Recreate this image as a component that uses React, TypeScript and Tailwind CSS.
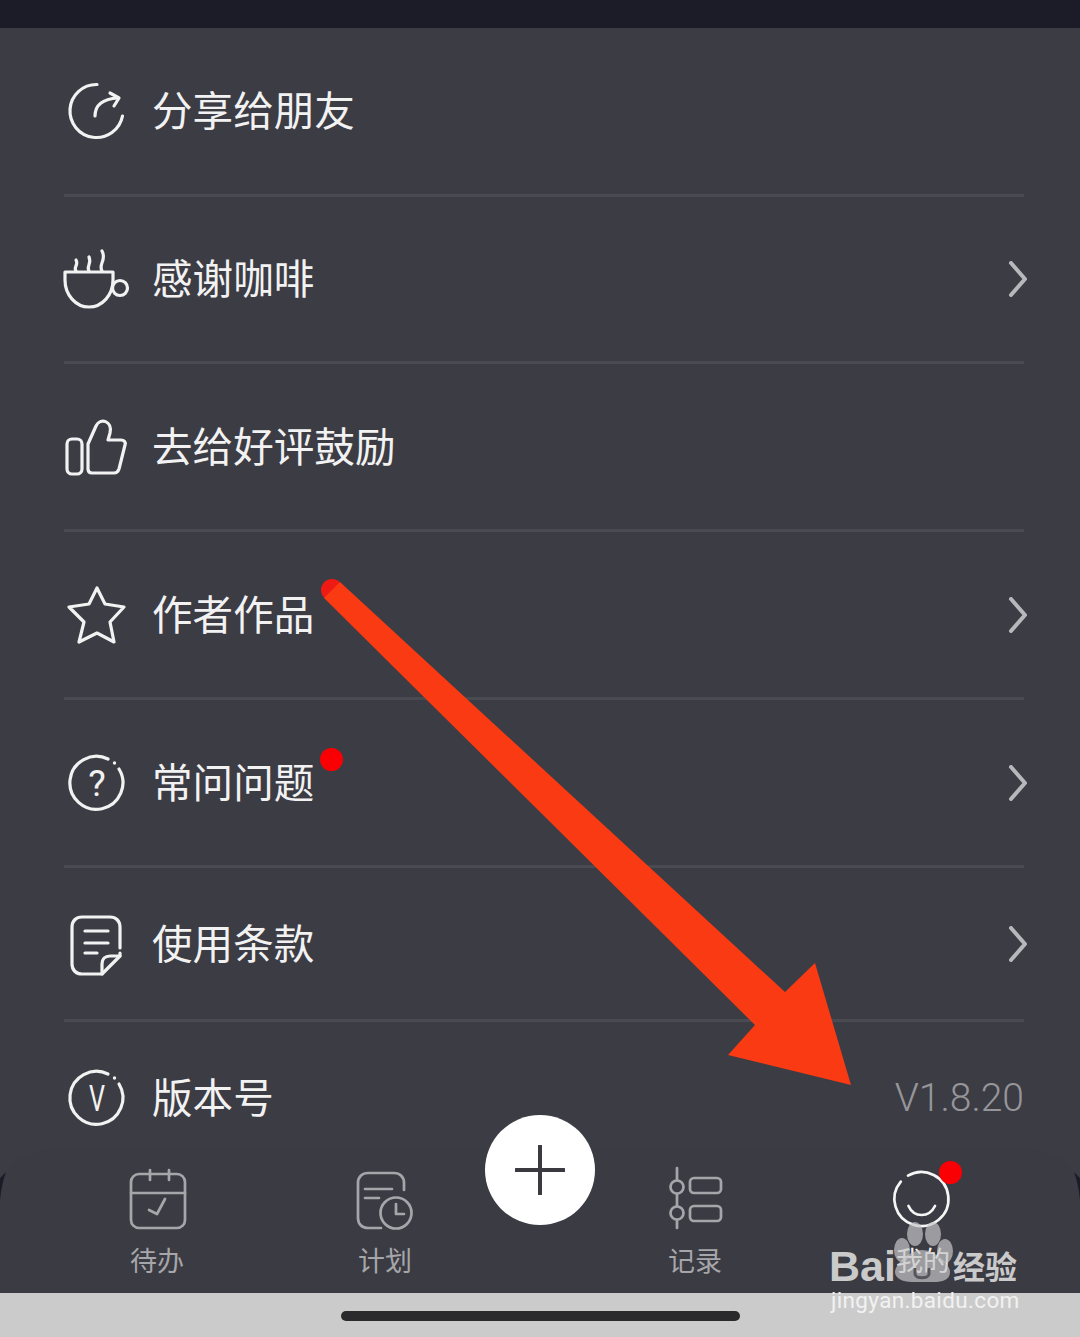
import React from "react";

const cjk = "font-['Noto_Sans_CJK_SC','Noto_Sans',sans-serif]";

type IconProps = { children: React.ReactNode };
const RowIcon = ({ children }: IconProps) => (
  <svg width="64" height="64" viewBox="0 0 64 64" fill="none" stroke="#f2f2f2" strokeWidth="3.2" strokeLinecap="round" strokeLinejoin="round" className="shrink-0 overflow-visible">
    {children}
  </svg>
);
const NavIcon = ({ children, color = "#a6a6aa" }: IconProps & { color?: string }) => (
  <svg width="60" height="64" viewBox="0 0 60 64" fill="none" stroke={color} strokeWidth="2.7" strokeLinecap="round" strokeLinejoin="round" className="shrink-0 overflow-visible">
    {children}
  </svg>
);

const Chevron = () => (
  <svg width="20" height="36" viewBox="0 0 20 36" fill="none" stroke="#b8b8bc" strokeWidth="4" strokeLinecap="round" strokeLinejoin="round" className="-mr-[4px]">
    <path d="M3 2 L17 18 L3 34" />
  </svg>
);

const Row = ({ icon, label, chevron, dot, className, children }: { icon: React.ReactNode; label: string; chevron?: boolean; dot?: boolean; className: string; children?: React.ReactNode }) => (
  <div className={`flex items-center ${className}`}>
    {icon}
    <span className={`relative ml-[24px] -mt-[4px] text-[40.6px] leading-[56px] text-[#f2f2f2] font-normal ${cjk}`}>
      {label}
      {dot && <span className="absolute left-[168px] top-[-5px] w-[23px] h-[23px] rounded-full bg-[#fa0005]" />}
    </span>
    <div className="flex-1" />
    {chevron && <Chevron />}
    {children}
  </div>
);

const border = "border-b-[3px] border-[#4a4a51]";

const RingWithDot = () => (
  <>
    <path d="M44 8 A26.5 26.5 0 1 0 55 18" />
    <circle cx="50.5" cy="12" r="1.7" fill="#f2f2f2" stroke="none" />
  </>
);

export default function App() {
  return (
    <div className={`relative w-[1080px] h-[1337px] overflow-hidden bg-[#3c3c44] ${cjk}`}>
      <div className="h-[28px] bg-[#1c1c28]" />
      <div className="mx-[64px] w-[960px]">
        <Row className={`h-[169px] ${border}`} label="分享给朋友" icon={
          <RowIcon>
            <path d="M33 5.5 A26.5 26.5 0 1 0 58.5 37" />
            <path d="M31 37 C31 27 37 20 54 19" />
            <path d="M46 14 L55 19 L50 27" />
          </RowIcon>
        } />
        <Row className={`h-[167px] ${border}`} label="感谢咖啡" chevron icon={
          <RowIcon>
            <path d="M1 25 H49 V33 A24 27 0 0 1 1 33 Z" />
            <circle cx="56" cy="41" r="7.5" />
            <path d="M12 24 C9 20 15 18 12 13" />
            <path d="M25 24 C22 19 28 17 25 10" />
            <path d="M38 24 C34 17 43 13 38 4" />
          </RowIcon>
        } />
        <Row className={`h-[168px] ${border}`} label="去给好评鼓励" icon={
          <RowIcon>
            <rect x="3" y="24" width="15" height="35" rx="5" />
            <path d="M24 54 V29 L32 11 C36 2 49 6 46 18 L44 25 H57 C60 25 62 27 61 30 L55 54 C54 57 53 58 50 58 H28 C25 58 24 56 24 54 Z" />
          </RowIcon>
        } />
        <Row className={`h-[168px] ${border}`} label="作者作品" chevron icon={
          <RowIcon>
            <polygon points="33,5 41,21 60,24 46,39 50,59 33,50 15,59 20,39 5,24 25,21" />
          </RowIcon>
        } />
        <Row className={`h-[168px] ${border}`} label="常问问题" chevron dot icon={
          <RowIcon>
            <RingWithDot />
            <text x="33" y="45" textAnchor="middle" fontSize="37" fontWeight="400" fill="#f2f2f2" stroke="none" fontFamily="Roboto, sans-serif">?</text>
          </RowIcon>
        } />
        <Row className={`h-[154px] ${border}`} label="使用条款" chevron icon={
          <RowIcon>
            <path d="M56 36 V15 C56 9 52 5 46 5 H18 C12 5 8 9 8 15 V52 C8 58 12 62 18 62 H38 L56 44 V41" />
            <path d="M38 62 V52 C38 47 41 44 46 44 H56" />
            <path d="M21 19 H44 M21 31 H44 M21 41 H33" />
          </RowIcon>
        } />
        <Row className="h-[128px] pt-[24px]" label="版本号" icon={
          <RowIcon>
            <RingWithDot />
            <text transform="translate(33 45) scale(0.68 1)" textAnchor="middle" fontSize="37" fontWeight="400" fill="#f2f2f2" stroke="none" fontFamily="Roboto, sans-serif">V</text>
          </RowIcon>
        }>
          <span className="text-[39px] leading-[56px] text-[#96969a] font-light font-['Roboto',sans-serif]">V1.8.20</span>
        </Row>
      </div>

      <nav className="relative h-[143px] grid grid-cols-[314px_142px_168px_142px_314px] rounded-t-[48px] bg-[#3b3b43] pt-[18px]">
        <NavItem label="待办">
          <NavIcon>
            <rect x="4" y="6" width="54" height="54" rx="8" />
            <path d="M23 2 V12 M42 2 V12 M4 25 H58" />
            <path d="M22 42 L30 46 L38 31" />
          </NavIcon>
        </NavItem>
        <NavItem label="计划">
          <NavIcon>
            <path d="M49 22 V15 C49 9 45 5 39 5 H13 C7 5 3 9 3 15 V50 C3 56 7 60 13 60 H26" />
            <circle cx="41" cy="45" r="15.5" />
            <path d="M41 36 V46 H49" />
            <path d="M10 21 H37 M10 30 H24" />
          </NavIcon>
        </NavItem>
        <div className="flex justify-center">
          <button className="-mt-[53px] w-[110px] h-[110px] rounded-full bg-white flex items-center justify-center">
            <svg width="50" height="50" viewBox="0 0 50 50" stroke="#3a3a40" strokeWidth="4" strokeLinecap="round">
              <path d="M25 1 V49 M1 25 H49" />
            </svg>
          </button>
        </div>
        <NavItem label="记录">
          <NavIcon>
            <circle cx="12" cy="19" r="6.5" />
            <circle cx="12" cy="45" r="6.5" />
            <path d="M12 0 V12 M12 26 V38 M12 52 V60" />
            <rect x="25" y="10" width="31" height="15" rx="4" />
            <rect x="25" y="38" width="31" height="15" rx="4" />
          </NavIcon>
        </NavItem>
        <NavItem label="我的" active>
          <NavIcon color="#f6f6f6">
            <path d="M15 7.6 A27 27 0 1 1 7.8 13.6" />
            <path d="M15.5 38 C21 50 36 50 42 38" />
          </NavIcon>
          <span className="absolute left-[173px] top-[-7px] w-[23px] h-[23px] rounded-full bg-[#fa0005]" />
        </NavItem>
        <svg className="absolute left-0 top-[20px]" width="10" height="30" viewBox="0 0 10 30"><path d="M0 30 V8 L6 2 C3 10 1 20 0 30 Z" fill="#1c1c28" /></svg>
        <svg className="absolute right-0 top-[20px]" width="10" height="30" viewBox="0 0 10 30"><path d="M10 30 V8 L4 2 C7 10 9 20 10 30 Z" fill="#1c1c28" /></svg>
      </nav>

      <div className="h-[44px] bg-[#cbcbcb] flex justify-center pt-[18px]">
        <div className="w-[399px] h-[10px] rounded-full bg-[#2a2a2c]" />
      </div>

      {/* red annotation arrow */}
      <svg className="absolute left-0 top-0 pointer-events-none" width="1080" height="1337" viewBox="0 0 1080 1337">
        <circle cx="332" cy="590" r="11" fill="#f01a14" />
        <polygon points="340,582 785,992 815,963 851,1085 728,1055 755,1025 324,598" fill="#f93a12" />
      </svg>

      {/* watermark */}
      <div className="absolute left-[828px] top-[1222px] w-[200px] h-[94px] pointer-events-none">
        <svg className="absolute left-0 top-0" width="200" height="64" viewBox="0 0 200 64">
          <g fill="#c6c6c8" fillOpacity="0.7">
            <ellipse cx="87" cy="12" rx="8" ry="12" />
            <ellipse cx="105" cy="12" rx="8" ry="12" />
            <ellipse cx="74" cy="28" rx="8" ry="12" />
            <ellipse cx="117" cy="29" rx="8" ry="12" />
            <path d="M94 28 C106 28 122 42 122 50 C122 58 114 60 106 60 H84 C74 60 67 56 67 50 C67 42 82 28 94 28 Z" />
          </g>
          <path d="M87 46 V52 C87 57 101 57 101 52 V46" fill="none" stroke="#55555b" strokeWidth="3" />
        </svg>
        <span className="absolute left-[1px] top-[20px] text-[43px] leading-[48px] font-bold text-[#cacaca] font-['Liberation_Sans',sans-serif]">Bai</span>
        <span className={`absolute left-[125px] top-[23px] text-[32px] leading-[40px] font-bold text-[#cacaca] ${cjk}`}>经验</span>
        <span className="absolute left-[3px] top-[65px] text-[22.5px] leading-[26px] tracking-[0.35px] text-[#f2f2f2] font-['Roboto',sans-serif]">jingyan.baidu.com</span>
      </div>
    </div>
  );
}

function NavItem({ label, children, active }: { label: string; children: React.ReactNode; active?: boolean }) {
  return (
    <div className="relative flex flex-col items-center">
      {children}
      <span className={`mt-[10px] text-[27px] leading-[36px] ${active ? "text-[#f0f0f0]" : "text-[#a6a6aa]"}`}>{label}</span>
    </div>
  );
}
